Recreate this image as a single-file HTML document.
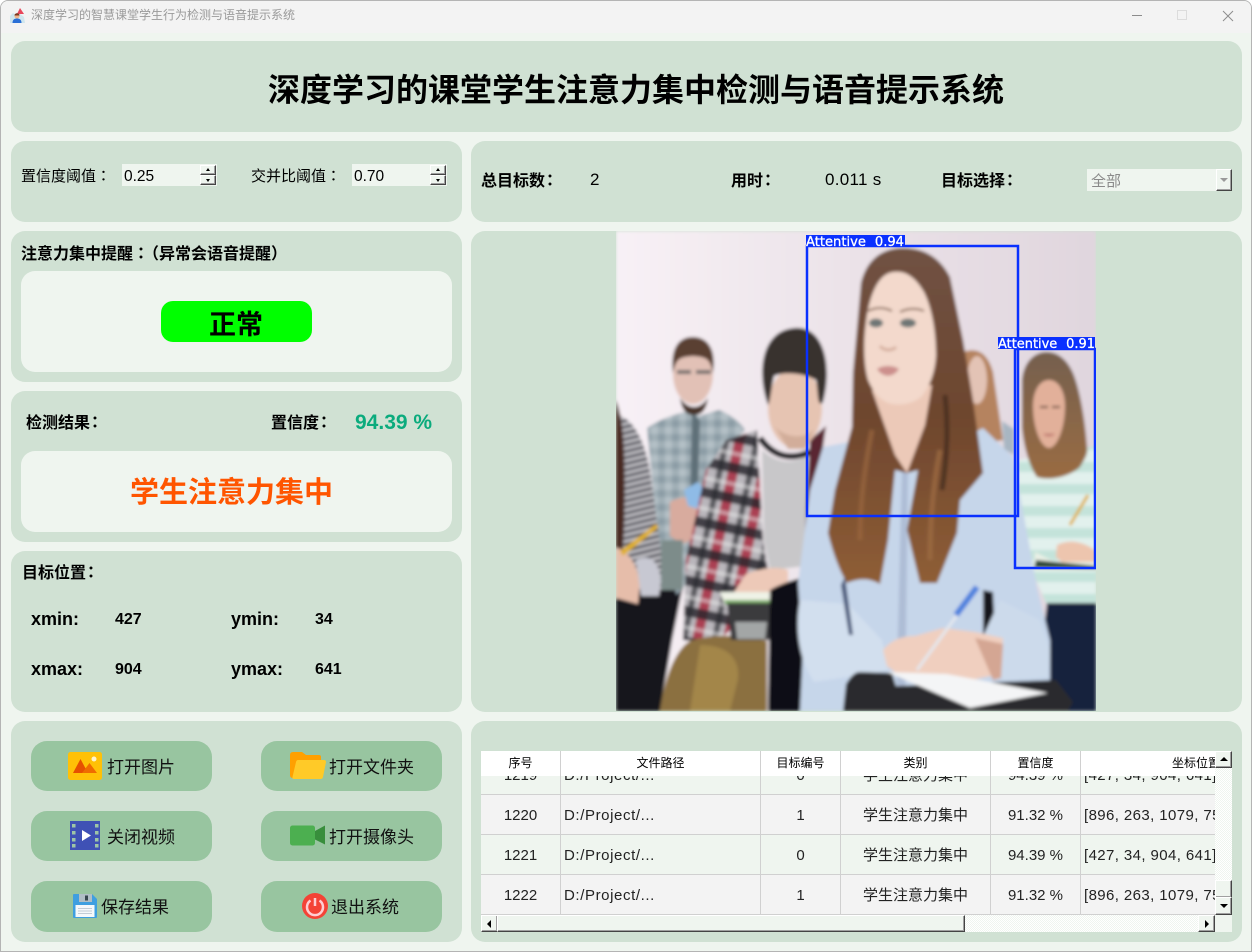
<!DOCTYPE html>
<html><head><meta charset="utf-8"><title>深度学习的智慧课堂学生行为检测与语音提示系统</title>
<style>
html,body{margin:0;padding:0;width:1252px;height:952px;overflow:hidden;background:#fff}
*{box-sizing:border-box}
#w{position:absolute;left:0;top:0;width:1252px;height:952px;background:#eff5ef;border:1px solid #b4b4b4;border-radius:8px 8px 0 0;overflow:hidden;font-family:"Liberation Sans","Noto Sans CJK SC",sans-serif;color:#000}
.a{position:absolute}
.k{font-family:"Noto Sans CJK TC",sans-serif}
.p{position:absolute;background:#d0e1d3;border-radius:14px}
.i{position:absolute;background:#eff5ef;border-radius:14px}
.t{position:absolute;white-space:nowrap}
.b{font-weight:bold}
.btn{position:absolute;background:#98c5a0;border-radius:16px;width:181px}
.btn span{position:absolute;font-size:17px;line-height:26px;white-space:nowrap;color:#111}
.btn svg{position:absolute}
.sb{position:absolute;background:#eff5ef;border-top:1px solid #fff;border-left:1px solid #fff;border-right:1px solid #444;border-bottom:1px solid #444;box-shadow:inset -1px -1px 0 #a0a0a0}
.tri{position:absolute;width:0;height:0}
.c{position:absolute;text-align:center;white-space:nowrap;overflow:hidden}
.hd{font-size:12px;line-height:25px;top:751px;height:25px;color:#000}
.cell{font-size:15px;line-height:41px;height:39px;color:#222}
.l1{letter-spacing:.6px;text-align:left}
.l2{letter-spacing:.4px;text-align:left}
.vl{position:absolute;width:1px;background:#d0d0d0;top:751px;height:163px}
.hl{position:absolute;left:481px;width:734px;height:1px;background:#d0d0d0}
.dith{background-color:#f6f9f6;background-image:repeating-conic-gradient(#fff 0 25%,#eff5ef 0 50%);background-size:2px 2px}
</style></head><body>
<div id="w">
<div style="position:absolute;left:-1px;top:-1px;width:1252px;height:952px">
<!-- title bar -->
<div class="a" style="left:0;top:0;width:1252px;height:33px;background:#f3f3f3"></div>
<svg class="a" style="left:9px;top:7px" width="17" height="17" viewBox="0 0 17 17"><path d="M1 9l3-3 3 2 4-1 4 3 1 6H1z" fill="#cfe6ee"/><path d="M11 1l4 6H8z" fill="#e8475a"/><circle cx="8" cy="9" r="2.500" fill="#f0b48c"/><path d="M5.500 8.500c0-3 5-3 5 0z" fill="#7a3a20"/><path d="M3.500 16c0-3.500 2-4.500 4.500-4.500s4.500 1 4.500 4.500z" fill="#2a6fd6"/></svg>
<div class="t" style="left:31px;top:7px;font-size:12px;line-height:17px;color:#9a9a9a">深度学习的智慧课堂学生行为检测与语音提示系统</div>
<div class="a" style="left:1132px;top:15px;width:10px;height:1px;background:#8c8c8c"></div>
<div class="a" style="left:1177px;top:10px;width:10px;height:10px;border:1px solid #dcdcdc"></div>
<svg class="a" style="left:1222px;top:10px" width="12" height="12"><path d="M1 1l10 10M11 1L1 11" stroke="#8c8c8c" stroke-width="1" fill="none"/></svg>

<!-- panels -->
<div class="p" style="left:11px;top:41px;width:1231px;height:91px"></div>
<div class="t b" style="left:268px;top:66px;font-size:32px;line-height:48px">深度学习的课堂学生注意力集中检测与语音提示系统</div>

<div class="p" style="left:11px;top:141px;width:451px;height:81px"></div>
<div class="t" style="left:21px;top:165px;font-size:15px;line-height:22px">置信度阈值<span class="k">：</span></div>
<div class="a" style="left:122px;top:164px;width:95px;height:22px;background:#eff5ef"></div>
<div class="t" style="left:124px;top:166px;font-size:15.500px;line-height:22px">0.25</div>
<div class="sb" style="left:200px;top:165px;width:16px;height:10px"><div class="tri" style="left:5px;top:2px;border:2px solid transparent;border-top:0;border-bottom:3px solid #000"></div></div>
<div class="sb" style="left:200px;top:175px;width:16px;height:10px"><div class="tri" style="left:5px;top:3px;border:2px solid transparent;border-bottom:0;border-top:3px solid #000"></div></div>
<div class="t" style="left:251px;top:165px;font-size:15px;line-height:22px">交并比阈值<span class="k">：</span></div>
<div class="a" style="left:352px;top:164px;width:95px;height:22px;background:#eff5ef"></div>
<div class="t" style="left:354px;top:166px;font-size:15.500px;line-height:22px">0.70</div>
<div class="sb" style="left:430px;top:165px;width:16px;height:10px"><div class="tri" style="left:5px;top:2px;border:2px solid transparent;border-top:0;border-bottom:3px solid #000"></div></div>
<div class="sb" style="left:430px;top:175px;width:16px;height:10px"><div class="tri" style="left:5px;top:3px;border:2px solid transparent;border-bottom:0;border-top:3px solid #000"></div></div>

<div class="p" style="left:471px;top:141px;width:771px;height:81px"></div>
<div class="t b" style="left:481px;top:167px;font-size:16px;line-height:24px">总目标数<span class="k" style="margin-left:-3px">：</span></div>
<div class="t" style="left:590px;top:168px;font-size:17px;line-height:24px;letter-spacing:.3px">2</div>
<div class="t b" style="left:731px;top:167px;font-size:16px;line-height:24px">用时<span class="k" style="margin-left:-3px">：</span></div>
<div class="t" style="left:825px;top:168px;font-size:17px;line-height:24px;letter-spacing:.3px">0.011 s</div>
<div class="t b" style="left:941px;top:167px;font-size:16px;line-height:24px">目标选择<span class="k" style="margin-left:-3px">：</span></div>
<div class="a" style="left:1087px;top:169px;width:145px;height:22px;background:#eff5ef"></div>
<div class="t" style="left:1091px;top:171px;font-size:15px;line-height:22px;color:#8a8a8a">全部</div>
<div class="sb" style="left:1216px;top:169px;width:16px;height:22px"><div class="tri" style="left:3px;top:8px;border:4px solid transparent;border-bottom:0;border-top:4px solid #999"></div></div>

<div class="p" style="left:11px;top:231px;width:451px;height:151px"></div>
<div class="t b" style="left:21px;top:240px;font-size:16px;line-height:24px">注意力集中提醒<span class="k">：</span><span style="margin-left:2px">（异常会语音提醒）</span></div>
<div class="i" style="left:21px;top:271px;width:431px;height:101px"></div>
<div class="a" style="left:161px;top:301px;width:151px;height:41px;background:#00ff00;border-radius:12px"></div>
<div class="t b" style="left:209px;top:305px;font-size:27px;line-height:41px">正常</div>

<div class="p" style="left:11px;top:391px;width:451px;height:151px"></div>
<div class="t b" style="left:26px;top:409px;font-size:16px;line-height:24px">检测结果<span class="k" style="margin-left:-3px">：</span></div>
<div class="t b" style="left:271px;top:409px;font-size:16px;line-height:24px">置信度<span class="k" style="margin-left:-3px">：</span></div>
<div class="t b" style="left:355px;top:411px;font-size:21px;line-height:24px;color:#0bab7d">94.39 %</div>
<div class="i" style="left:21px;top:451px;width:431px;height:81px"></div>
<div class="t b" style="left:130px;top:472px;font-size:29px;line-height:43px;color:#ff5500">学生注意力集中</div>

<div class="p" style="left:11px;top:551px;width:451px;height:161px"></div>
<div class="t b" style="left:22px;top:559px;font-size:16px;line-height:24px">目标位置<span class="k" style="margin-left:-3px">：</span></div>
<div class="t b" style="left:31px;top:609px;font-size:18px;line-height:20px">xmin:</div>
<div class="t b" style="left:115px;top:610px;font-size:16px;line-height:20px">427</div>
<div class="t b" style="left:231px;top:609px;font-size:18px;line-height:20px">ymin:</div>
<div class="t b" style="left:315px;top:610px;font-size:16px;line-height:20px">34</div>
<div class="t b" style="left:31px;top:659px;font-size:18px;line-height:20px">xmax:</div>
<div class="t b" style="left:115px;top:660px;font-size:16px;line-height:20px">904</div>
<div class="t b" style="left:231px;top:659px;font-size:18px;line-height:20px">ymax:</div>
<div class="t b" style="left:315px;top:660px;font-size:16px;line-height:20px">641</div>

<!-- image panel -->
<div class="p" style="left:471px;top:231px;width:771px;height:481px"></div>
<svg class="a" style="left:0;top:0" width="1252" height="952" viewBox="0 0 1252 952">
<defs>
<clipPath id="cp"><rect x="616" y="231" width="480" height="480"/></clipPath>
<filter id="bl" x="-5%" y="-5%" width="110%" height="110%"><feGaussianBlur stdDeviation="1.500"/></filter>
<linearGradient id="bg" x1="0" x2="1" y1="0" y2="0"><stop offset="0" stop-color="#f8f1f6"/><stop offset=".5" stop-color="#ebe2e8"/><stop offset="1" stop-color="#e0d6de"/></linearGradient>
<linearGradient id="hr" gradientUnits="userSpaceOnUse" x1="0" x2="0" y1="248" y2="584"><stop offset="0" stop-color="#6f5244"/><stop offset=".5" stop-color="#6e462e"/><stop offset="1" stop-color="#8f5e36"/></linearGradient>
<linearGradient id="hr2" x1="0" x2="0" y1="0" y2="1"><stop offset="0" stop-color="#75604f"/><stop offset="1" stop-color="#9a6c42"/></linearGradient>
<pattern id="plaid" width="30" height="30" patternUnits="userSpaceOnUse" patternTransform="rotate(12)"><rect width="30" height="30" fill="#b9b6bb"/><rect x="0" width="10" height="30" fill="#a8243a" opacity=".8"/><rect y="0" width="30" height="10" fill="#25242a" opacity=".8"/><rect x="19" width="6" height="30" fill="#2a292f" opacity=".65"/><rect y="19" width="30" height="4" fill="#eee" opacity=".5"/></pattern>
<pattern id="stripe" width="8" height="6" patternUnits="userSpaceOnUse" patternTransform="rotate(-14)"><rect width="8" height="6" fill="#c4c3c8"/><rect width="8" height="3" fill="#4c4c54"/></pattern>
<pattern id="teal" width="10" height="22" patternUnits="userSpaceOnUse"><rect width="10" height="22" fill="#e2f1ed"/><rect width="10" height="10" fill="#c4e3da"/></pattern>
<pattern id="denim" width="14" height="14" patternUnits="userSpaceOnUse"><rect width="14" height="14" fill="#a0afb6"/><rect width="7" height="7" fill="#8c9da6"/><rect x="7" y="7" width="7" height="7" fill="#b4c0c6"/></pattern>
</defs>
<g clip-path="url(#cp)">
<g filter="url(#bl)">
<rect x="616" y="231" width="480" height="480" fill="url(#bg)"/>
<!-- left person -->
<path d="M616 415c18 2 32 30 36 70l10 62-1 50-45 6z" fill="url(#stripe)"/>
<path d="M616 400c8 20 10 60 8 130l-3 50-5 4z" fill="#4a2c22"/>
<path d="M616 590h66l-10 50-12 71h-44z" fill="#15161f"/>
<path d="M616 548c8 0 20 12 24 34l-2 22-22-6z" fill="#e6bdaa"/>
<path d="M636 560c12-6 22-2 25 20l-2 16h-18z" fill="#c7c8d2"/>
<path d="M620 551l36-27 3 3-36 29z" fill="#e0b030"/>
<!-- man w/ glasses -->
<path d="M647 428c18-12 36-16 48-18l4 6 20-6c10 4 22 12 26 20l-25 25-22 70 4 40-25 30-15-36-8-60z" fill="url(#denim)"/>
<path d="M692 412l8 8-2 80h-8z" fill="#5f6f78"/>
<ellipse cx="693" cy="374" rx="20" ry="30" fill="#e2c1b6"/>
<path d="M673 373c-3-28 8-36 20-36s24 9 20 36c-3-14-6-16-20-17-14 1-17 3-20 17z" fill="#5a3f30"/>
<path d="M680 398c8 12 20 12 28 0-2 12-6 17-14 17s-12-5-14-17z" fill="#4a362c"/>
<path d="M677 372h14M696 372h15" stroke="#77716f" stroke-width="4"/>
<path d="M670 502c10-6 24-6 30-2l-4 38-14 6-12-8z" fill="#d8ab9e"/>
<path d="M684 490l14-8 8 10-4 18-14-4z" fill="#8fbbe6"/>
<path d="M661 540h22v50h-22z" fill="#7d8c8a"/>
<!-- man 2 -->
<path d="M757 430l6 110 5 30-10 30-40 43-35-3 3-80 20-90 20-30z" fill="url(#plaid)"/>
<path d="M762 450c16 14 30 14 46 6l-2 110-36 4-6-30z" fill="#c8c7c9"/>
<path d="M760 438c14 20 32 22 50 14" stroke="#1e1c20" stroke-width="6" fill="none"/>
<path d="M810 440l16-14-16 110-6 10z" fill="#5a2830"/>
<ellipse cx="795" cy="408" rx="27" ry="40" fill="#e6c4b2"/>
<path d="M768 405c-12-34-6-75 27-77 28-2 38 36 28 74-6 8-5-14-7-22-14-8-34-8-42-4-2 8-4 28-6 29z" fill="#37312e"/>
<path d="M774 425c8 12 30 16 40 4l-8 20-18 0z" fill="#d2ad9a"/>
<path d="M746 574c16-6 30-8 42-4v30h-42l-12-8z" fill="#edc9b8"/>
<!-- khaki, desk -->
<path d="M660 711c4-30 14-60 30-70 25-8 50-6 77 0v70z" fill="#8b6f3f"/>
<path d="M700 645c28 0 40 14 38 34l-8 32h-40z" fill="#a38648"/>
<path d="M720 592h60l-4 11h-52z" fill="#eef2e6"/>
<path d="M724 600h54l-2 5h-50z" fill="#7fb06c"/>
<path d="M727 603h45l-3 37h-38z" fill="#3a3a3e"/>
<path d="M735 622h32l-2 17h-28z" fill="#a3a6a6"/>
<path d="M770 590c14-8 30-12 40-14v135h-42z" fill="#111112"/>
<!-- right woman -->
<path d="M1018 460l78-14v157h-50l-26-60z" fill="url(#teal)"/>
<path d="M1047 603h49v108h-62z" fill="#17233c"/>
<path d="M1047 352c-16 0-25 15-25 31v44c2 22 8 40 15 50 12 4 32 0 43-10 6-10 8-14 7-20-2-30-8-60-14-74-6-14-16-21-26-21z" fill="url(#hr2)"/>
<path d="M1049 380c-10 0-16 12-16 26 0 22 8 42 16 42 8 0 16-20 16-42 0-14-6-26-16-26z" fill="#e2b09a"/>
<path d="M1040 407h8M1052 407h8" stroke="#6a4e40" stroke-width="2"/>
<path d="M1044 434c3 2 7 2 10 0" stroke="#c87e74" stroke-width="2"/>
<path d="M1070 525l18-30" stroke="#e0b040" stroke-width="3"/>
<path d="M1057 545c12-6 26-4 39 6v18h-26l-14-12z" fill="#edc5ae"/>
<path d="M1035 552l20 10h41v8h-62z" fill="#eaf0e6"/>
<path d="M1036 560l-2 8 62 1v-3z" fill="#2f4a3a"/>
<!-- far woman behind -->
<path d="M963 352Q985 344 993 372L1003 440L975 445z" fill="#b5835e"/>
<ellipse cx="977" cy="380" rx="10" ry="24" fill="#e3c3b5"/>
<path d="M1002 421l12 8 0 26-10-6z" fill="#a8b6c2"/>
<!-- main woman shirt -->
<path d="M823 447L810 490L798 583L803 650L800 711L1050 711L1050 640L1037 587L1013 457L983 428L960 440L907 473L860 440z" fill="#c6d6ea"/>
<path d="M902 470l6 3-3 238h-9z" fill="#aebdd6"/>
<!-- hair -->
<path d="M903 248C880 248 866 262 861 283L853 373L852 427L835 490L828 533Q836 565 847 583Q865 575 880 584L888 540L895 470L907 473L918 470L907 530L920 583L937 583L957 533L960 500L983 473L973 400L963 340L950 277Q935 248 903 248z" fill="url(#hr)"/>
<path d="M872 430Q860 490 860 540" stroke="#9a673e" stroke-width="5" fill="none" opacity=".7"/>
<path d="M940 450Q930 500 930 560" stroke="#a06e44" stroke-width="5" fill="none" opacity=".7"/>
<path d="M945 395Q950 440 942 490" stroke="#3f2a20" stroke-width="5" fill="none" opacity=".7"/>
<!-- neck -->
<path d="M872 390L932 385L925 425L907 473L895 455z" fill="#ecc9b8"/>
<!-- face -->
<path d="M893 272C877 274 869 298 866 322C863 344 864 366 868 380C874 394 882 402 892 404C904 406 916 402 922 396C930 386 935 372 936 356C936 332 932 308 924 292C916 278 906 270 893 272z" fill="#f3d9cc"/>
<path d="M868 311c8-4 16-4 24 0M900 312c8-4 17-4 24-1" stroke="#8a6a58" stroke-width="2" fill="none"/>
<ellipse cx="876" cy="323" rx="7" ry="4.500" fill="#6e7674"/>
<ellipse cx="908" cy="323" rx="8" ry="4.500" fill="#6e7674"/>
<path d="M880 346c4 5 12 5 16 1" stroke="#d4ad9c" stroke-width="3" fill="none"/>
<path d="M877 369c6-4 16-4 22 0-6 9-16 9-22 0z" fill="#cc8f8c"/>
<!-- hands & sleeves -->
<path d="M800 600c-6 30 0 62 14 82l40-6 34-6-6-30-34-36z" fill="#d2dfee"/>
<path d="M845 577l8 58-4 0-8-50z" fill="#4a587a"/>
<path d="M983 590l10 2 2 40-12 2z" fill="#17181f"/>
<path d="M1000 600l40 20 10 30-2 27-44 4-24-38z" fill="#ccdaeb"/>
<path d="M883 650c10-12 22-14 32-14l28-8 32 4 28 6-2 36-40 8-30 8-28-12-16-12z" fill="#f0cfbf"/>
<path d="M975 638l28 6-2 34-8 2z" fill="#d4a693"/>
<path d="M917 670l60-82" stroke="#e4e8ee" stroke-width="3"/>
<path d="M956 615l21-28" stroke="#4f82de" stroke-width="6"/>
<path d="M846 684c4-6 8-12 14-12l32 1 4 13 160-6 17 22-5 9H843z" fill="#2a2c2e"/>
<path d="M887 672l60 2 101 19-78 15z" fill="#f4f5f6"/>
</g>
</g>
<!-- detection boxes -->
<g clip-path="url(#cp)">
<rect x="1015" y="349" width="80" height="219" fill="none" stroke="#0a30ff" stroke-width="2.500"/>
<rect x="807" y="246" width="211" height="270" fill="none" stroke="#0a30ff" stroke-width="2.500"/>
<rect x="806" y="235" width="99" height="11" fill="#0a30ff"/>
<rect x="998" y="337" width="97" height="12" fill="#0a30ff"/>
<text x="806" y="246" font-family="'DejaVu Sans',sans-serif" font-size="13.500" fill="#fff" stroke="#fff" stroke-width=".3" word-spacing="5" textLength="98" lengthAdjust="spacingAndGlyphs">Attentive 0.94</text>
<text x="998" y="348" font-family="'DejaVu Sans',sans-serif" font-size="13.500" fill="#fff" stroke="#fff" stroke-width=".3" word-spacing="5" textLength="97" lengthAdjust="spacingAndGlyphs">Attentive 0.91</text>
</g>
</svg>

<!-- buttons panel -->
<div class="p" style="left:11px;top:721px;width:451px;height:221px"></div>
<div class="btn" style="left:31px;top:741px;height:50px"><svg style="left:37px;top:11px" width="34" height="28" viewBox="0 0 34 28"><rect width="34" height="28" rx="2.500" fill="#ffc107"/><path d="M5 21L12.500 7 20 21z" fill="#e65100"/><path d="M14 21l7.500-10 7.500 10z" fill="#ef6c00"/><circle cx="26" cy="7" r="2.500" fill="#fff3cd"/></svg><span style="left:76px;top:14px">打开图片</span></div>
<div class="btn" style="left:261px;top:741px;height:50px"><svg style="left:29px;top:11px" width="36" height="28" viewBox="0 0 36 28"><path d="M0 3q0-3 3-3h9l4 3h13q2 0 2 2v21H3q-3 0-3-3z" fill="#ffa000"/><path d="M8 8h26q2 0 2 2l-3 15q-.5 2-2.500 2H4q-2 0-1.500-2L6 10q.5-2 2-2z" fill="#ffca28"/></svg><span style="left:68px;top:14px">打开文件夹</span></div>
<div class="btn" style="left:31px;top:811px;height:50px"><svg style="left:39px;top:10px" width="30" height="29" viewBox="0 0 30 29"><rect width="30" height="29" fill="#3f51b5"/><g fill="#9fc6a6"><rect x="2" y="3" width="3.500" height="3.500"/><rect x="2" y="10" width="3.500" height="3.500"/><rect x="2" y="17" width="3.500" height="3.500"/><rect x="2" y="23" width="3.500" height="3.500"/><rect x="25" y="3" width="3.500" height="3.500"/><rect x="25" y="10" width="3.500" height="3.500"/><rect x="25" y="17" width="3.500" height="3.500"/><rect x="25" y="23" width="3.500" height="3.500"/></g><path d="M12 9l9 5.500-9 5.500z" fill="#fff"/></svg><span style="left:76px;top:14px">关闭视频</span></div>
<div class="btn" style="left:261px;top:811px;height:50px"><svg style="left:29px;top:14px" width="35" height="21" viewBox="0 0 35 21"><rect width="25" height="20" y=".5" rx="2.500" fill="#4caf50"/><path d="M25 6l10-5.500v19l-10-5z" fill="#388e3c"/></svg><span style="left:68px;top:14px">打开摄像头</span></div>
<div class="btn" style="left:31px;top:881px;height:51px"><svg style="left:42px;top:13px" width="24" height="24" viewBox="0 0 24 24"><path d="M1 0h18l5 5v18a1 1 0 0 1-1 1H1a1 1 0 0 1-1-1V1a1 1 0 0 1 1-1z" fill="#3f9fe0"/><rect x="6" y="0" width="13" height="8" fill="#b0bec5"/><rect x="12" y="1.500" width="3" height="5" fill="#37474f"/><rect x="2.500" y="11" width="19" height="12" fill="#f5f8fb"/><path d="M5 14.500h14M5 17h14M5 19.500h14" stroke="#c3ccd6"/></svg><span style="left:70px;top:14px">保存结果</span></div>
<div class="btn" style="left:261px;top:881px;height:51px"><svg style="left:41px;top:12px" width="26" height="26" viewBox="0 0 26 26"><circle cx="13" cy="13" r="13" fill="#f44336"/><path d="M8.500 7.500a8 8 0 1 0 9 0" fill="none" stroke="#ffcdd2" stroke-width="2.500"/><path d="M13 5v8" stroke="#ffcdd2" stroke-width="2.500"/></svg><span style="left:70px;top:14px">退出系统</span></div>

<!-- table panel -->
<div class="p" style="left:471px;top:721px;width:771px;height:221px"></div>
<div class="a" style="left:481px;top:751px;width:734px;height:163px;overflow:hidden">
 <div class="a" style="left:0;top:0;width:734px;height:43px;background:#eff5ef"></div>
 <div class="a" style="left:0;top:44px;width:734px;height:39px;background:#f3f3f3"></div>
 <div class="a" style="left:0;top:84px;width:734px;height:39px;background:#eff5ef"></div>
 <div class="a" style="left:0;top:124px;width:734px;height:39px;background:#f3f3f3"></div>
</div>
<div class="vl" style="left:560px"></div><div class="vl" style="left:760px"></div><div class="vl" style="left:840px"></div><div class="vl" style="left:990px"></div><div class="vl" style="left:1080px"></div>
<div class="hl" style="top:794px"></div><div class="hl" style="top:834px"></div><div class="hl" style="top:874px"></div><div class="hl" style="top:914px"></div>

<div class="c cell" style="left:481px;width:79px;top:755px">1219</div>
<div class="c cell l1" style="left:564px;top:755px;width:190px">D:/Project/...</div>
<div class="c cell" style="left:761px;width:79px;top:755px">0</div>
<div class="c cell" style="left:841px;width:149px;top:755px">学生注意力集中</div>
<div class="c cell" style="left:991px;width:89px;top:755px">94.39 %</div>
<div class="c cell l2" style="left:1084px;width:131px;top:755px">[427, 34, 904, 641]</div>

<div class="c cell" style="left:481px;width:79px;top:795px">1220</div>
<div class="c cell l1" style="left:564px;top:795px;width:190px">D:/Project/...</div>
<div class="c cell" style="left:761px;width:79px;top:795px">1</div>
<div class="c cell" style="left:841px;width:149px;top:795px">学生注意力集中</div>
<div class="c cell" style="left:991px;width:89px;top:795px">91.32 %</div>
<div class="c cell l2" style="left:1084px;width:131px;top:795px">[896, 263, 1079, 756]</div>

<div class="c cell" style="left:481px;width:79px;top:835px">1221</div>
<div class="c cell l1" style="left:564px;top:835px;width:190px">D:/Project/...</div>
<div class="c cell" style="left:761px;width:79px;top:835px">0</div>
<div class="c cell" style="left:841px;width:149px;top:835px">学生注意力集中</div>
<div class="c cell" style="left:991px;width:89px;top:835px">94.39 %</div>
<div class="c cell l2" style="left:1084px;width:131px;top:835px">[427, 34, 904, 641]</div>

<div class="c cell" style="left:481px;width:79px;top:875px">1222</div>
<div class="c cell l1" style="left:564px;top:875px;width:190px">D:/Project/...</div>
<div class="c cell" style="left:761px;width:79px;top:875px">1</div>
<div class="c cell" style="left:841px;width:149px;top:875px">学生注意力集中</div>
<div class="c cell" style="left:991px;width:89px;top:875px">91.32 %</div>
<div class="c cell l2" style="left:1084px;width:131px;top:875px">[896, 263, 1079, 756]</div>

<!-- header -->
<div class="a" style="left:481px;top:751px;width:734px;height:25px;background:#fff"></div>
<div class="vl" style="left:560px;height:25px"></div><div class="vl" style="left:760px;height:25px"></div><div class="vl" style="left:840px;height:25px"></div><div class="vl" style="left:990px;height:25px"></div><div class="vl" style="left:1080px;height:25px"></div>
<div class="c hd" style="left:481px;width:79px">序号</div>
<div class="c hd" style="left:561px;width:199px">文件路径</div>
<div class="c hd" style="left:761px;width:79px">目标编号</div>
<div class="c hd" style="left:841px;width:149px">类别</div>
<div class="c hd" style="left:991px;width:89px">置信度</div>
<div class="c hd" style="left:1172px;width:43px;text-align:left">坐标位置</div>

<!-- scrollbars -->
<div class="a dith" style="left:1215px;top:751px;width:17px;height:164px"></div>
<div class="a" style="left:1215px;top:915px;width:17px;height:17px;background:#eff5ef"></div>
<div class="sb" style="left:1215px;top:751px;width:17px;height:17px"><div class="tri" style="left:4px;top:5px;border:4px solid transparent;border-top:0;border-bottom:4px solid #000"></div></div>
<div class="sb" style="left:1215px;top:880px;width:17px;height:18px"></div>
<div class="sb" style="left:1215px;top:897px;width:17px;height:18px"><div class="tri" style="left:4px;top:6px;border:4px solid transparent;border-bottom:0;border-top:4px solid #000"></div></div>
<div class="a dith" style="left:481px;top:915px;width:734px;height:17px"></div>
<div class="sb" style="left:481px;top:915px;width:17px;height:17px"><div class="tri" style="left:5px;top:4px;border:4px solid transparent;border-left:0;border-right:4px solid #000"></div></div>
<div class="sb" style="left:497px;top:915px;width:468px;height:17px"></div>
<div class="sb" style="left:1198px;top:915px;width:17px;height:17px"><div class="tri" style="left:6px;top:4px;border:4px solid transparent;border-right:0;border-left:4px solid #000"></div></div>
</div>
</div>
</body></html>
